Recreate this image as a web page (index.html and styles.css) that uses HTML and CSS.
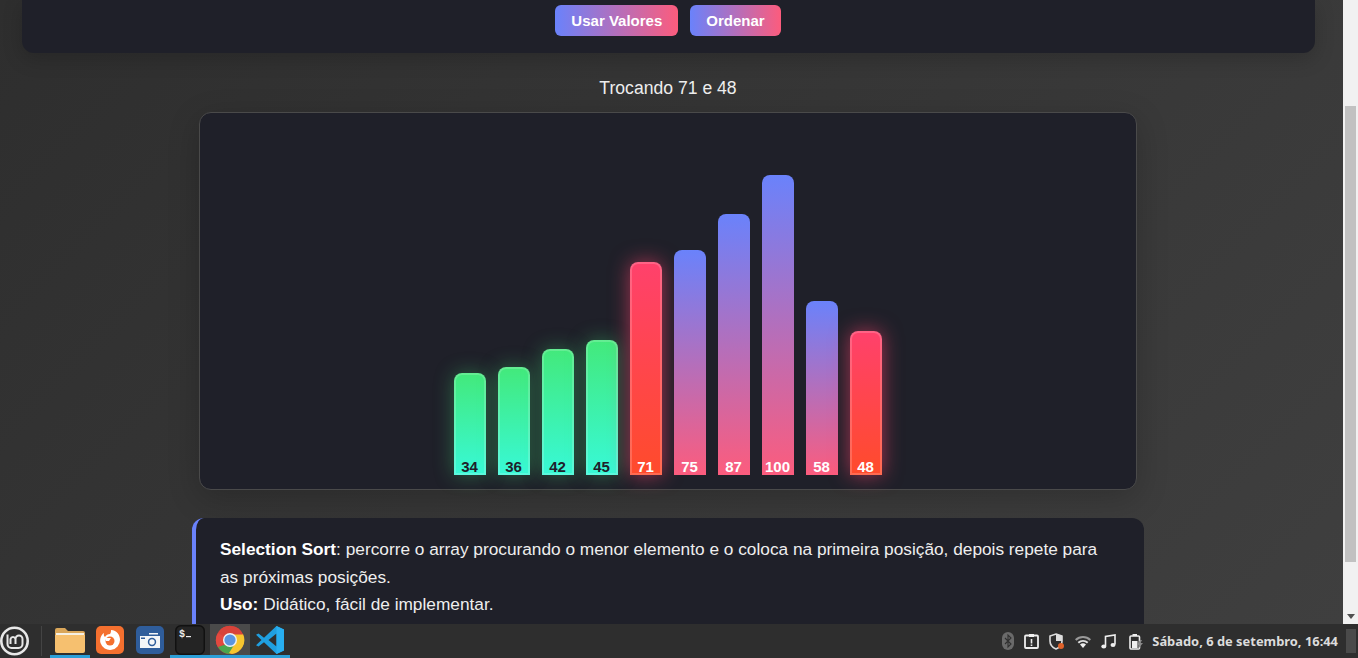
FILE: index.html
```html
<!DOCTYPE html>
<html lang="pt-BR">
<head>
<meta charset="utf-8">
<title>Selection Sort</title>
<link rel="stylesheet" href="styles.css">
</head>
<body>
<div class="screen">
  <div class="browser">
    <div class="page">
      <div class="controls">
        <button class="btn btn-use">Usar Valores</button>
        <button class="btn btn-sort">Ordenar</button>
      </div>
      <div class="status">Trocando 71 e 48</div>
      <div class="chart">
        <div class="bar bar-done" style="height:102px"><span class="bar-value">34</span></div>
        <div class="bar bar-done" style="height:108px"><span class="bar-value">36</span></div>
        <div class="bar bar-done" style="height:126px"><span class="bar-value">42</span></div>
        <div class="bar bar-done" style="height:135px"><span class="bar-value">45</span></div>
        <div class="bar bar-swap" style="height:213px"><span class="bar-value">71</span></div>
        <div class="bar" style="height:225px"><span class="bar-value">75</span></div>
        <div class="bar" style="height:261px"><span class="bar-value">87</span></div>
        <div class="bar" style="height:300px"><span class="bar-value">100</span></div>
        <div class="bar" style="height:174px"><span class="bar-value">58</span></div>
        <div class="bar bar-swap" style="height:144px"><span class="bar-value">48</span></div>
      </div>
      <div class="info">
        <strong>Selection Sort</strong>: percorre o array procurando o menor elemento e o coloca na primeira posição, depois repete para as próximas posições.<br>
        <strong>Uso:</strong> Didático, fácil de implementar.
      </div>
    </div>
    <div class="scrollbar">
      <div class="scroll-thumb"></div>
      <div class="scroll-down"></div>
    </div>
  </div>

  <div class="taskbar">
    <div class="menu-logo">
      <svg width="30" height="30" viewBox="0 0 30 30"><circle cx="14.500" cy="15" r="13.200" fill="none" stroke="#e8e8e8" stroke-width="2.600"/><path d="M7.500 8.500V18a4 4 0 0 0 4 4h7a4 4 0 0 0 4-4v-5a3.500 3.500 0 0 0-7 0v5M15.500 13a2.600 2.600 0 0 0-5 0v5" fill="none" stroke="#e8e8e8" stroke-width="2"/></svg>
    </div>
    <div class="launcher">
      <div class="slot slot-open">
        <svg width="30" height="26" viewBox="0 0 30 26"><path d="M0 3a2 2 0 0 1 2-2h8l3 3h15a2 2 0 0 1 2 2v3H0z" fill="#d9a65a"/><path d="M1 6h28v3H1z" fill="#f5f0e4"/><path d="M0 8h30v16a2 2 0 0 1-2 2H2a2 2 0 0 1-2-2z" fill="#f6c06f"/></svg>
      </div>
      <div class="slot">
        <svg width="28" height="28" viewBox="0 0 28 28"><rect width="28" height="28" rx="5" fill="#f4702f"/><path d="M15 4c6 .5 9 5 9 10a10 10 0 0 1-19.500 3C3.500 13 5 9 8 7c-.5 2 0 3 1 4 1-2 3-3 5-3 1-1 1-3 1-4z" fill="#fff"/><circle cx="14" cy="15" r="4.500" fill="#f4702f"/><path d="M9 12h6l-2 3h-3z" fill="#fff"/></svg>
      </div>
      <div class="slot">
        <svg width="28" height="28" viewBox="0 0 28 28"><rect width="28" height="28" rx="5" fill="#2f5d9b"/><path d="M4 10h20v12H4z" fill="#f4f6f8"/><path d="M13 7h9v1.500h-9z" fill="#f4f6f8"/><path d="M5 11.500h4v1.500H5z" fill="#2f5d9b"/><circle cx="16" cy="16" r="4.200" fill="#2f5d9b"/><circle cx="16" cy="16" r="2.700" fill="#f4f6f8"/></svg>
      </div>
      <div class="slot slot-open">
        <svg width="30" height="30" viewBox="0 0 30 30"><rect x=".75" y=".75" width="28.500" height="28.500" rx="5" fill="#242424" stroke="#111" stroke-width="1.500"/><text class="term-text" x="4" y="12">$</text><path d="M11 11h5v1.200h-5z" fill="#eee"/></svg>
      </div>
      <div class="slot slot-open slot-active">
        <svg width="30" height="30" viewBox="0 0 30 30"><circle cx="15" cy="15" r="14" fill="#d8433a"/><path d="M15 15L3 22.500A14 14 0 0 1 3 8z" fill="#e2493f"/><path d="M3 22a14 14 0 0 0 12 7l6-13z" fill="#4aa54e"/><path d="M15 9h13a14 14 0 0 1-11 20l-3-1 7-11z" fill="#f6c52f"/><path d="M3.500 7A14 14 0 0 1 28 9.500H15z" fill="#d8433a"/><circle cx="15" cy="15" r="7" fill="#eef2f6"/><circle cx="15" cy="15" r="5.600" fill="#5a95e0"/></svg>
      </div>
      <div class="slot slot-open">
        <svg width="30" height="30" viewBox="0 0 30 30"><path d="M21.500 1L29 4.600v20.800L21.500 29 9 17.300 3.500 21.600 1 20.300 6.500 15 1 9.700l2.500-1.300L9 12.700z" fill="#1f9fe0"/><path d="M21.500 8.500L13.500 15l8 6.500z" fill="#2f2f2f"/><path d="M21.500 1L29 4.600v20.800L21.500 29z" fill="#28aef0"/></svg>
      </div>
    </div>
    <div class="tray">
      <svg class="tray-icon" width="12" height="18" viewBox="0 0 12 18"><rect width="12" height="18" rx="6" fill="#6a6a6a"/><path d="M3 6l6 6-3 3V3l3 3-6 6" fill="none" stroke="#2f2f2f" stroke-width="1.100"/></svg>
      <svg class="tray-icon" width="15" height="16" viewBox="0 0 15 16"><rect x="1" y="2.500" width="13" height="12.500" rx="1" fill="none" stroke="#eee" stroke-width="1.800"/><path d="M5 1h5v3H5z" fill="#eee"/><path d="M6.700 6h1.600v4.500H6.700zM6.700 11.500h1.600v1.500H6.700z" fill="#eee"/></svg>
      <svg class="tray-icon" width="16" height="17" viewBox="0 0 16 17"><path d="M7 1l6 2v5c0 4-2.500 6.500-6 8-3.500-1.500-6-4-6-8V3z" fill="none" stroke="#ddd" stroke-width="1.600"/><path d="M7 1l6 2v5H7z" fill="#ddd"/><circle cx="12" cy="13" r="3" fill="#e0622a"/></svg>
      <svg class="tray-icon" width="16" height="13" viewBox="0 0 16 13"><path d="M0 4.200a11.500 11.500 0 0 1 16 0l-1.400 1.500a9.500 9.500 0 0 0-13.200 0z" fill="#999"/><path d="M2.600 7a8 8 0 0 1 10.800 0L12 8.400a6 6 0 0 0-8 0z" fill="#ddd"/><path d="M5 9.500a4.500 4.500 0 0 1 6 0L8 13z" fill="#eee"/></svg>
      <svg class="tray-icon tray-music" width="15" height="15" viewBox="0 0 15 15"><path d="M4.500 12V2.500L14 1v9.500" fill="none" stroke="#eee" stroke-width="1.600"/><ellipse cx="2.800" cy="12.500" rx="2.500" ry="2" fill="#eee"/><ellipse cx="12" cy="11" rx="2.500" ry="2" fill="#eee"/></svg>
      <svg class="tray-icon tray-power" width="15" height="17" viewBox="0 0 15 17"><rect x="1" y="3" width="9.500" height="13" rx="1" fill="none" stroke="#eee" stroke-width="1.600"/><path d="M3.500 1h4.500v2H3.500zM3 8h5.500v7H3z" fill="#eee"/><path d="M11 7l-3 5h2l-1 4 5-6h-2.500l1.500-3z" fill="#8a8a8a"/></svg>
      <span class="clock">Sábado, 6 de setembro, 16:44</span>
      <div class="desktop-btn"></div>
    </div>
  </div>
</div>
</body>
</html>
```

FILE: styles.css
```css
/* Selection sort visualizer, seen in a browser on a desktop */

html, body
{ margin: 0;
height: 100%;
overflow: hidden;
}

body
{ font-family: "Liberation Sans", Arial, sans-serif;
color: #f0f0f0;
}

.screen
{ display: flex;
flex-direction: column;
height: 658px;
}

.browser
{ display: flex;
height: 624px;
}

.page
{ box-sizing: border-box;
width: 1343px;
height: 624px;
padding-right: 7px;
overflow: hidden;
background: linear-gradient(135deg, #2e2e2e, #3f3f3f);
display: flex;
flex-direction: column;
align-items: center;
}

/* Controls */

.controls
{ box-sizing: border-box;
width: 1293px;
height: 53px;
padding-top: 5px;
display: flex;
justify-content: center;
gap: 12px;
background: #1f2029;
border-radius: 0 0 12px 12px;
box-shadow: 0 6px 20px rgba(0, 0, 0, 0.18);
flex-shrink: 0;
}

.btn
{ height: 31px;
padding: 0 16px;
border: 0;
border-radius: 6px;
font-family: inherit;
font-size: 15px;
font-weight: bold;
color: #fff;
background: linear-gradient(90deg, #6a82fb, #fc5c7d);
}

.status
{ margin-top: 25px;
height: 20px;
line-height: 20px;
font-size: 17.600px;
color: #eee;
flex-shrink: 0;
}

/* Bars */

.chart
{ box-sizing: border-box;
width: 938px;
height: 378px;
margin-top: 14px;
padding-bottom: 14px;
display: flex;
justify-content: center;
align-items: flex-end;
gap: 12px;
background: #1f2029;
border: 1px solid #4a4a4a;
border-radius: 12px;
box-shadow: 0 8px 32px rgba(0, 0, 0, 0.2);
flex-shrink: 0;
}

.bar
{ box-sizing: border-box;
width: 32px;
display: flex;
justify-content: center;
align-items: flex-end;
border-radius: 8px 8px 0 0;
background: linear-gradient(180deg, #6a82fb, #fc5c7d);
background-origin: border-box;
}

.bar-value
{ padding-right: 1px;
font-size: 15px;
line-height: 16px;
font-weight: bold;
color: #fff;
}

.bar-done
{ background-image: linear-gradient(180deg, #43e97b, #38f9d7);
border: 2px solid rgba(255, 255, 255, 0.18);
box-shadow: 0 0 20px rgba(67, 233, 123, 0.35);
}

.bar-done .bar-value
{ margin-bottom: -2px;
color: #1f2029;
}

.bar-swap
{ background-image: linear-gradient(180deg, #ff416c, #ff4b2b);
border: 2px solid rgba(255, 255, 255, 0.18);
box-shadow: 0 0 20px rgba(255, 65, 108, 0.6);
}

.bar-swap .bar-value
{ margin-bottom: -2px;
}

/* Description */

.info
{ box-sizing: border-box;
width: 952px;
margin-top: 28px;
padding: 18px 30px 18px 24px;
background: #1f2029;
border-left: 4px solid #6a82fb;
border-radius: 12px;
font-size: 17.280px;
line-height: 27.500px;
color: #eee;
flex-shrink: 0;
}

.info strong
{ color: #fff;
}

/* Browser scrollbar */

.scrollbar
{ box-sizing: border-box;
width: 15px;
height: 624px;
padding: 106px 2px 0;
background: #f1f1f1;
display: flex;
flex-direction: column;
align-items: center;
}

.scroll-thumb
{ width: 11px;
height: 456px;
background: #c1c1c1;
}

.scroll-down
{ margin-top: auto;
margin-bottom: 5px;
border-top: 5px solid #505050;
border-left: 4px solid transparent;
border-right: 4px solid transparent;
}

/* Desktop panel */

.taskbar
{ height: 34px;
display: flex;
align-items: stretch;
background: #2e2e2e;
}

.menu-logo
{ width: 42px;
display: flex;
align-items: center;
border-right: 1px solid #444;
box-sizing: border-box;
margin: 2px 0;
}

.launcher
{ display: flex;
margin-left: 8px;
}

.slot
{ box-sizing: border-box;
width: 40px;
display: flex;
align-items: center;
justify-content: center;
border-bottom: 3px solid transparent;
}

.slot-open
{ border-bottom-color: #2c9fd8;
}

.slot-active
{ background: #4a4a4a;
}

.term-text
{ font-family: "Liberation Mono", monospace;
font-size: 10px;
font-weight: bold;
fill: #eee;
}

.tray
{ margin-left: auto;
display: flex;
align-items: center;
}

.tray-icon
{ margin-right: 10px;
}

.tray-music
{ margin-right: 13px;
}

.tray-power
{ margin-right: 8px;
}

.clock
{ font-family: "Noto Sans", sans-serif;
font-size: 12.900px;
font-weight: bold;
color: #dcdcdc;
white-space: nowrap;
}

.desktop-btn
{ width: 10px;
height: 24px;
margin: 0 2px 0 8px;
background: #4a4a4a;
}
```
